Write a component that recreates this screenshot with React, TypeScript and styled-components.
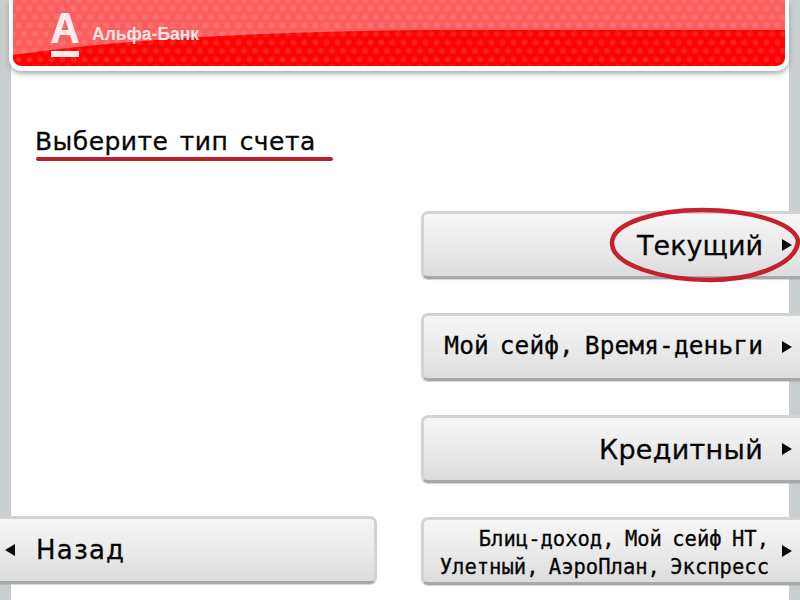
import React from "react";
import styled, { createGlobalStyle } from "styled-components";

const Global = createGlobalStyle`
  html, body { margin: 0; padding: 0; background: #fff; }
  body { width: 800px; height: 600px; overflow: hidden; font-family: "DejaVu Sans", "Liberation Sans", sans-serif; }
`;

const Page = styled.div`
  position: relative;
  width: 800px;
  height: 600px;
  overflow: hidden;
  display: flex;
  flex-direction: column;
  background:
    linear-gradient(#c9ced1, #c9ced1) left top / 11px 100% no-repeat,
    linear-gradient(#c9ced1, #c9ced1) right top / 11px 100% no-repeat,
    #fff;
`;

const Header = styled.header`
  position: relative;
  flex: none;
  box-sizing: border-box;
  height: 71px;
  margin: 0 11px 0 9px;
  border: 4px solid #fff;
  border-top: none;
  border-bottom-width: 5px;
  border-radius: 0 0 13px 13px;
  overflow: hidden;
  background-color: #fb0303;
  background-image:
    radial-gradient(circle, #f61e1e 0 2.5px, transparent 3.5px),
    radial-gradient(circle, #f61e1e 0 2.5px, transparent 3.5px);
  background-size: 11px 17px;
  background-position: 0 0, 5.5px 8.5px;
  box-shadow: 0 3px 5px rgba(120, 128, 135, 0.6);
`;

const Gloss = styled.svg`
  position: absolute;
  inset: 0;
  width: 100%;
  height: 100%;
`;

const LogoMark = styled.svg`
  position: absolute;
  left: 38px;
  top: 12px;
  width: 28px;
  height: 46px;
`;

const BrandName = styled.span`
  position: absolute;
  left: 79px;
  top: 24px;
  font-family: "Liberation Sans", sans-serif;
  font-size: 17.5px;
  font-weight: 700;
  line-height: 20px;
  color: #fde6e6;
  white-space: nowrap;
`;

const Body = styled.main`
  flex: 1;
  display: flex;
  justify-content: space-between;
  align-items: stretch;
`;

const LeftColumn = styled.section`
  width: 377px;
  display: flex;
  flex-direction: column;
  justify-content: space-between;
  padding: 57px 0 16px;
  box-sizing: border-box;
`;

const RightColumn = styled.section`
  width: 379px;
  display: flex;
  flex-direction: column;
  gap: 34px;
  padding: 140px 0 0;
  box-sizing: border-box;
`;

const TitleBlock = styled.div`
  margin-left: 35px;
  width: 298px;
`;

const Title = styled.h1`
  margin: 0;
  font-family: "DejaVu Sans", sans-serif;
  font-size: 25px;
  font-weight: 400;
  line-height: 28px;
  letter-spacing: 0.45px;
  word-spacing: 3px;
  color: #050505;
  white-space: nowrap;
  -webkit-text-stroke: 0.3px #050505;
`;

const TitleRule = styled.div`
  height: 4px;
  margin: 1px 0 0 1px;
  border-radius: 2px;
  background: #bc1f2b;
`;

const ActionButton = styled.button<{ $side: "left" | "right" }>`
  box-sizing: border-box;
  width: 100%;
  height: 68px;
  display: flex;
  align-items: center;
  gap: ${(p) => (p.$side === "right" ? "19px" : "21px")};
  justify-content: ${(p) => (p.$side === "right" ? "flex-end" : "flex-start")};
  padding: ${(p) => (p.$side === "right" ? "0 8px 0 0" : "0 0 0 5px")};
  border: 3px solid #d2d4d4;
  border-bottom-color: #a5a9aa;
  border-${(p) => p.$side}: none;
  border-radius: ${(p) => (p.$side === "right" ? "7px 0 0 7px" : "0 7px 7px 0")};
  background: linear-gradient(#f6f6f6, #ececec 45%, #dcdcdc);
  box-shadow: 0 1px 1px rgba(150, 155, 158, 0.45);
  color: #050505;
  font: inherit;
`;

const Label = styled.span<{ $mono?: boolean; $size: number; $spacing?: number; $words?: number }>`
  font-family: ${(p) => (p.$mono ? '"DejaVu Sans Mono"' : '"DejaVu Sans"')}, sans-serif;
  font-size: ${(p) => p.$size}px;
  letter-spacing: ${(p) => p.$spacing ?? 0}px;
  word-spacing: ${(p) => p.$words ?? 0}px;
  line-height: 29px;
  white-space: nowrap;
  text-align: right;
  -webkit-text-stroke: 0.3px #050505;
`;

const LiftedLabel = styled(Label)`
  margin-bottom: 3px;
`;

const WideLabel = styled(Label)`
  margin: 4px -6px 0 0;
  line-height: 28px;
`;

const ArrowRight = styled.span`
  flex: none;
  width: 0;
  height: 0;
  border-top: 6px solid transparent;
  border-bottom: 6px solid transparent;
  border-left: 10px solid #0a0a0a;
`;

const ArrowLeft = styled.span`
  flex: none;
  width: 0;
  height: 0;
  border-top: 6px solid transparent;
  border-bottom: 6px solid transparent;
  border-right: 10px solid #0a0a0a;
`;

const Circle = styled.svg`
  position: absolute;
  left: 606px;
  top: 205px;
  width: 194px;
  height: 80px;
  pointer-events: none;
`;

export default function App() {
  return (
    <Page>
      <Global />
      <Header>
        <Gloss viewBox="0 0 772 66" preserveAspectRatio="none">
          <path d="M0 0H772V30H420Q160 32 0 55Z" fill="#fff" fillOpacity="0.36" />
        </Gloss>
        <LogoMark viewBox="0 0 28 46">
          <path d="M0 31 L10 1 H18 L28 31 H21.5 L19 23 H9 L6.5 31Z M10.5 18 H17.5 L14 7Z" fill="#fdeaea" fillRule="evenodd" />
          <rect x="0" y="39" width="28" height="6" fill="#fdeaea" />
        </LogoMark>
        <BrandName>Альфа-Банк</BrandName>
      </Header>
      <Body>
        <LeftColumn>
          <TitleBlock>
            <Title>Выберите тип счета</Title>
            <TitleRule />
          </TitleBlock>
          <ActionButton $side="left">
            <ArrowLeft />
            <Label $size={26} $spacing={1.2}>Назад</Label>
          </ActionButton>
        </LeftColumn>
        <RightColumn>
          <ActionButton $side="right">
            <Label $size={27}>Текущий</Label>
            <ArrowRight />
          </ActionButton>
          <ActionButton $side="right">
            <LiftedLabel $mono $size={24.5} $spacing={0.1} $words={-4}>Мой сейф, Время-деньги</LiftedLabel>
            <ArrowRight />
          </ActionButton>
          <ActionButton $side="right">
            <Label $size={27} $spacing={0.3}>Кредитный</Label>
            <ArrowRight />
          </ActionButton>
          <ActionButton $side="right">
            <WideLabel $mono $size={20.5} $words={-2}>
              Блиц-доход, Мой сейф НТ,
              <br />
              Улетный, АэроПлан, Экспресс
            </WideLabel>
            <ArrowRight />
          </ActionButton>
        </RightColumn>
      </Body>
      <Circle viewBox="0 0 194 80">
        <path
          d="M192 35C186 16 140 5 96 5C50 5 6 18 6 38C6 60 56 75 104 75C150 75 192 58 192 35Z"
          fill="none"
          stroke="#c5202c"
          strokeWidth="4.5"
        />
      </Circle>
    </Page>
  );
}
